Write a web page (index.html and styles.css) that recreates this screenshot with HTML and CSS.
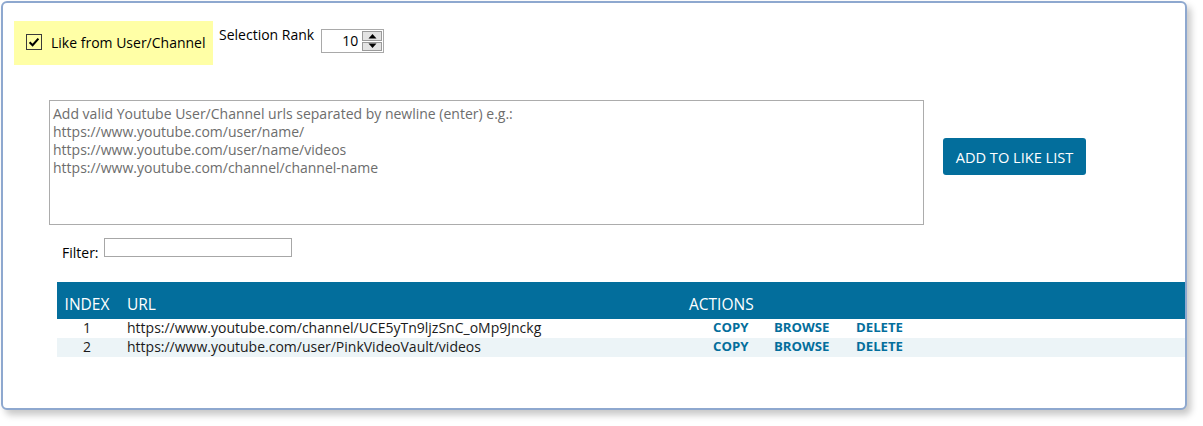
FILE: index.html
```html
<!DOCTYPE html>
<html lang="en">
<head>
<meta charset="utf-8">
<title>Like from User/Channel</title>
<link rel="stylesheet" href="styles.css">
</head>
<body>
<div class="panel">
  <div class="top-row">
    <label class="like-box">
      <svg class="check" width="16" height="16" viewBox="0 0 16 16"><rect x="0.5" y="0.5" width="15" height="15" fill="none" stroke="#3a3a3a"/><path d="M3.6 8.2 L6.6 11.2 L12.4 4.6" fill="none" stroke="#000" stroke-width="2.1"/></svg>
      <span>Like from User/Channel</span>
    </label>
    <span class="rank-label">Selection Rank</span>
    <div class="spinner">
      <span class="spin-value">10</span>
      <div class="spin-btns">
        <span class="spin-btn"><svg width="9" height="6" viewBox="0 0 9 6"><path d="M0.5 5.5 L4.5 1 L8.5 5.5Z" fill="#000"/></svg></span>
        <span class="spin-btn"><svg width="9" height="6" viewBox="0 0 9 6"><path d="M0.5 0.5 L4.5 5 L8.5 0.5Z" fill="#000"/></svg></span>
      </div>
    </div>
  </div>

  <div class="add-row">
    <div class="urls">
      <div>Add valid Youtube User/Channel urls separated by newline (enter) e.g.:</div>
      <div>https://www.youtube.com/user/name/</div>
      <div>https://www.youtube.com/user/name/videos</div>
      <div>https://www.youtube.com/channel/channel-name</div>
    </div>
    <button class="add-btn">ADD TO LIKE LIST</button>
  </div>

  <div class="filter-row">
    <span class="filter-label">Filter:</span>
    <span class="filter-input"></span>
  </div>

  <div class="table">
    <div class="thead">
      <span class="c-index">INDEX</span>
      <span class="c-url">URL</span>
      <span class="c-actions">ACTIONS</span>
    </div>
    <div class="trow">
      <span class="c-index">1</span>
      <span class="c-url">https://www.youtube.com/channel/UCE5yTn9ljzSnC_oMp9Jnckg</span>
      <span class="c-actions acts"><a class="a-copy">COPY</a><a class="a-browse">BROWSE</a><a>DELETE</a></span>
    </div>
    <div class="trow alt">
      <span class="c-index">2</span>
      <span class="c-url">https://www.youtube.com/user/PinkVideoVault/videos</span>
      <span class="c-actions acts"><a class="a-copy">COPY</a><a class="a-browse">BROWSE</a><a>DELETE</a></span>
    </div>
  </div>
</div>
</body>
</html>
```

FILE: styles.css
```css
* { box-sizing: border-box; }
html, body { margin: 0; padding: 0; background: #fff; }
body {
  font-family: "Open Sans", "Noto Sans", sans-serif;
  font-size: 14px;
  color: #000;
  width: 1203px;
  height: 426px;
  overflow: hidden;
}
.panel {
  margin: 1px 0 0 1px;
  width: 1186px;
  height: 409px;
  border: 2px solid #8ea8cf;
  border-radius: 6px;
  box-shadow: 4px 5px 7px rgba(0,0,0,0.22);
  background: #fff;
  overflow: hidden;
}
.top-row {
  display: flex;
  align-items: flex-start;
  margin: 18px 0 0 11px;
}
.like-box {
  display: flex;
  align-items: center;
  width: 199px;
  height: 44px;
  padding-left: 12px;
  padding-bottom: 2px;
  background: #ffffa6;
  font-size: 14px;
}
.like-box .check { margin-right: 9px; flex: none; }
.rank-label {
  margin-left: 6px;
  margin-top: 5px;
  font-size: 14px;
  line-height: 18px;
}
.spinner {
  display: flex;
  margin: 8px 0 0 7px;
  width: 63px;
  height: 24px;
  border: 1px solid #a9a9a9;
  background: #fff;
}
.spin-value {
  flex: 1;
  text-align: right;
  padding-right: 4px;
  font-size: 14px;
  line-height: 22px;
}
.spin-btns {
  display: flex;
  flex-direction: column;
  width: 21px;
  padding: 1px 1px 1px 0;
  gap: 1px;
}
.spin-btn {
  flex: 1;
  display: flex;
  align-items: center;
  justify-content: center;
  background: #e3e3e3;
  border: 1px solid #9a9a9a;
}
.add-row {
  display: flex;
  align-items: flex-start;
  margin: 35px 0 0 46px;
}
.urls {
  width: 875px;
  height: 125px;
  border: 1px solid #acacac;
  padding: 4px 3px 3px;
  color: #6d6d6d;
  font-size: 14px;
  line-height: 18px;
}
.add-btn {
  margin: 38px 0 0 19px;
  width: 143px;
  height: 37px;
  border: none;
  border-radius: 3px;
  background: #036e9c;
  color: #fff;
  font-family: inherit;
  font-size: 14.6px;
  padding: 0;
}
.filter-row {
  display: flex;
  align-items: flex-start;
  margin: 13px 0 0 59px;
}
.filter-label {
  margin-top: 6px;
  margin-right: 5px;
  font-size: 14px;
  line-height: 18px;
}
.filter-input {
  width: 188px;
  height: 19px;
  border: 1px solid #a7a7a7;
}
.table {
  margin: 20px 0 0 54px;
}
.thead, .trow {
  display: flex;
}
.thead {
  height: 37px;
  background: #036e9c;
  color: #fff;
  align-items: flex-end;
  padding-bottom: 5px;
  font-size: 15.5px;
  line-height: 20px;
}
.trow {
  height: 19px;
  font-size: 14px;
  line-height: 17px;
  color: #1a1a1a;
}
.trow.alt { background: #ecf4f7; }
.c-index { width: 60px; text-align: center; flex: none; }
.c-url { width: 572px; padding-left: 10px; flex: none; }
.c-actions { padding-left: 0; }
.acts { padding-left: 24px; display: flex; }
.acts a {
  font-weight: 700;
  color: #036e9c;
  font-size: 13.2px;
}
.a-copy { width: 61px; }
.a-browse { width: 82px; }
```
